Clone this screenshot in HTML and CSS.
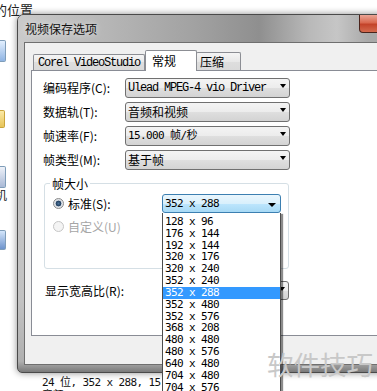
FILE: index.html
```html
<!DOCTYPE html>
<html>
<head>
<meta charset="utf-8">
<link rel="stylesheet" href="styles.css">
</head>
<body>
<div class="desk">
  <div class="desk-label">的位置</div>
  <div class="dicon dicon-a"></div>
  <div class="dicon dicon-b"></div>
  <div class="dicon dicon-c"></div>
  <div class="desk-char">机</div>
  <div class="dicon dicon-d"></div>
  <div class="status">
    <div>24 位, 352 x 288, 15</div>
    <div>音频:</div>
  </div>

  <div class="window">
    <div class="titlebar">
      <span class="title">视频保存选项</span>
      <span class="close"></span>
    </div>
    <div class="client">
      <div class="tabs">
        <div class="tab tab-corel"><span class="mono">Corel VideoStudio</span></div>
        <div class="tab tab-active">常规</div>
        <div class="tab tab-zip">压缩</div>
      </div>
      <div class="panel">
        <div class="form">
          <div class="lbl">编码程序(C):</div>
          <div class="combo"><span class="mono">Ulead MPEG-4 vio Driver</span><i class="arrow"></i></div>
          <div class="lbl">数据轨(T):</div>
          <div class="combo"><span>音频和视频</span><i class="arrow"></i></div>
          <div class="lbl">帧速率(F):</div>
          <div class="combo"><span class="num">15.000 帧/秒</span><i class="arrow"></i></div>
          <div class="lbl">帧类型(M):</div>
          <div class="combo"><span>基于帧</span><i class="arrow"></i></div>
        </div>
        <div class="group">
          <div class="legend">帧大小</div>
          <div class="group-grid">
            <div class="radio-row"><span class="radio checked"></span>标准(S):</div>
            <div class="combo focus"><span class="num">352 x 288</span><i class="arrow"></i></div>
            <div class="radio-row disabled"><span class="radio"></span>自定义(U)</div>
          </div>
        </div>
        <div class="aspect">
          <div class="lbl">显示宽高比(R):</div>
          <div class="combo"><i class="arrow"></i></div>
        </div>
      </div>
    </div>
  </div>

  <ul class="droplist">
    <li>128 x 96</li>
    <li>176 x 144</li>
    <li>192 x 144</li>
    <li>320 x 176</li>
    <li>320 x 240</li>
    <li>352 x 240</li>
    <li class="sel">352 x 288</li>
    <li>352 x 480</li>
    <li>352 x 576</li>
    <li>368 x 208</li>
    <li>480 x 480</li>
    <li>480 x 576</li>
    <li>640 x 480</li>
    <li>704 x 480</li>
    <li>704 x 576</li>
  </ul>

  <div class="watermark">软件技巧</div>
</div>
</body>
</html>
```

FILE: styles.css
```css
* { box-sizing: border-box; margin: 0; padding: 0; }
html, body { width: 377px; height: 391px; overflow: hidden; background: #fff; }
body { font-family: "Noto Sans CJK SC", sans-serif; font-size: 12px; color: #000; }

.desk { position: relative; width: 377px; height: 391px; overflow: hidden; background: #fff; }

.desk-label { position: absolute; left: -6px; top: 2px; font-size: 13px; line-height: 16px; color: #222; }
.dicon { position: absolute; left: 0; width: 6px; border: 1px solid #7f9db9; border-left: 0; border-radius: 0 2px 2px 0; }
.dicon-a { top: 40px; height: 22px; background: linear-gradient(#e3f0ff, #8fb4e3); }
.dicon-b { top: 110px; height: 18px; width: 5px; background: linear-gradient(#fbe9a6, #e7c458); border-color: #c9a43c; }
.dicon-c { top: 166px; height: 22px; background: linear-gradient(#eef2f9, #a9b9d6); }
.desk-char { position: absolute; left: -5px; top: 188px; font-size: 12px; line-height: 14px; color: #222; }
.dicon-d { top: 230px; height: 20px; background: linear-gradient(#d4e6fb, #6d93cc); }

.status { position: absolute; left: 42px; top: 376px; font-family: "DejaVu Sans Mono", "Noto Sans CJK SC", monospace; font-size: 11px; letter-spacing: -0.62px; line-height: 13px; color: #111; }

.window {
  position: absolute; left: 17px; top: 14px; width: 391px; height: 359px;
  border: 1px solid #4a4a4a; border-radius: 7px 7px 5px 5px;
  background: linear-gradient(180deg, #cbcbcb 0%, #c2c2c2 80%, #b0b0b0 97%, #7a7a7a 100%);
  padding: 0 0 7px 6px;
  display: flex; flex-direction: column;
  box-shadow: 0 0 7px rgba(0,0,0,.45);
}
.titlebar {
  height: 27px; margin-left: -6px; padding-left: 7px;
  display: flex; align-items: flex-start;
  border-radius: 6px 6px 0 0;
  background: linear-gradient(90deg, #cacaca 0%, #b4b4b4 25%, #a2a2a2 45%, #8f8f8f 62%, #b9b9b9 75%, #c6c6c6 82%, #a9a9a9 90%);
}
.title { line-height: 27px; font-size: 12px; color: #111; text-shadow: 0 0 6px rgba(255,255,255,.8); }
.close {
  margin-left: auto; margin-right: 5px; width: 43px; height: 18px;
  border: 1px solid #4a231b; border-top: 0; border-radius: 0 0 4px 4px;
  background: linear-gradient(#eba596, #d9684f 45%, #c3432a 55%, #d46a4e);
}

.client {
  flex: 1; background: #f0f0f0; border: 1px solid #6f6f6f;
  padding-left: 6px; display: flex; flex-direction: column;
}
.tabs { height: 27px; display: flex; align-items: flex-end; padding-left: 2px; }
.tab {
  border: 1px solid #8c8e94; border-bottom: 0; border-radius: 2px 2px 0 0;
  background: linear-gradient(#f5f5f5, #e8e8e8 50%, #dedede 50%, #dadada);
  display: flex; align-items: center;
}
.tab-corel { width: 112px; height: 16px; padding-left: 4px; }
.tab-active {
  width: 52px; height: 21px; margin-bottom: -1px; padding-left: 6px; padding-bottom: 2px;
  background: #fff; position: relative; z-index: 2; font-size: 12px;
}
.tab-zip { width: 45px; height: 18px; margin-left: -1px; padding-left: 3px; }

.mono { font-family: "Liberation Mono", monospace; font-size: 12px; letter-spacing: -1.2px; }
.num { font-family: "DejaVu Sans Mono", "Noto Sans CJK SC", monospace; font-size: 11px; letter-spacing: -0.62px; }

.panel {
  height: 266px; background: #fff; border: 1px solid #898c95; border-right: 0;
  position: relative; z-index: 1;
}
.form {
  display: grid; grid-template-columns: 82px 165px; grid-auto-rows: 20px; row-gap: 4px;
  padding: 7px 0 0 11px;
}
.lbl { line-height: 20px; font-size: 12px; }

.combo {
  position: relative; height: 20px; border: 1px solid #707070; border-radius: 3px;
  background: linear-gradient(#f4f4f4, #ececec 50%, #dfdfdf 50%, #d3d3d3);
  display: flex; align-items: center; padding-left: 2px; line-height: 18px;
  white-space: nowrap; overflow: hidden;
}
.arrow {
  position: absolute; right: 3px; top: 5px; width: 0; height: 0;
  border-left: 3.5px solid transparent; border-right: 3.5px solid transparent; border-top: 4px solid #000;
}
.combo.focus {
  height: 19px; border-color: #3c7fb1;
  background: linear-gradient(#eaf6fd, #d9f0fc 50%, #bee6fd 50%, #a7d9f5);
}
.combo.focus .arrow { right: 4px; top: 8px; border-left-width: 4px; border-right-width: 4px; }

.group {
  width: 245px; height: 86px; margin: 13px 0 0 12px;
  border: 1px solid #d5dfe5; border-radius: 3px;
}
.legend {
  width: fit-content; margin: -8px 0 0 5px; padding: 0 2px;
  background: #fff; line-height: 15px; font-size: 12px;
}
.group-grid {
  display: grid; grid-template-columns: 109px 119px; grid-auto-rows: 19px; row-gap: 4px;
  margin-top: 3px; padding-left: 8px;
}
.radio-row { display: flex; align-items: center; font-size: 12px; line-height: 19px; }
.radio {
  width: 11px; height: 11px; border-radius: 50%; margin-right: 4px;
  border: 1px solid #8a8a8a; background: linear-gradient(#e6e6e6, #fafafa);
}
.radio.checked { background: radial-gradient(circle, #4d7399 0, #1f3d5e 2.6px, #d8dde3 3.2px, #f2f2f2 100%); }
.radio-row.disabled { color: #a6a6a6; }
.radio-row.disabled .radio { border-color: #c6c6c6; background: #f4f4f4; }

.aspect {
  display: grid; grid-template-columns: 117px 127px; grid-auto-rows: 19px;
  margin-top: 12px; padding-left: 13px;
}
.aspect .lbl { line-height: 19px; }
.aspect .combo { height: 19px; }

.droplist {
  position: absolute; left: 162px; top: 213px; width: 119px; height: 190px;
  list-style: none; background: #fff; border: 1px solid #4d4d4d; border-top: 0;
  padding-top: 3px; z-index: 5;
  box-shadow: 2px 1px 1px rgba(0,0,0,.45);
  font-family: "DejaVu Sans Mono", monospace; font-size: 11px; letter-spacing: -0.62px;
}
.droplist li { height: 11.83px; line-height: 11.83px; padding-left: 2px; white-space: nowrap; }
.droplist li.sel { background: #3399ff; color: #fff; }

.watermark {
  position: absolute; left: 267px; top: 348px; z-index: 6;
  font-size: 26.5px; line-height: 32px; color: #c8c8c8; white-space: nowrap;
}
```
